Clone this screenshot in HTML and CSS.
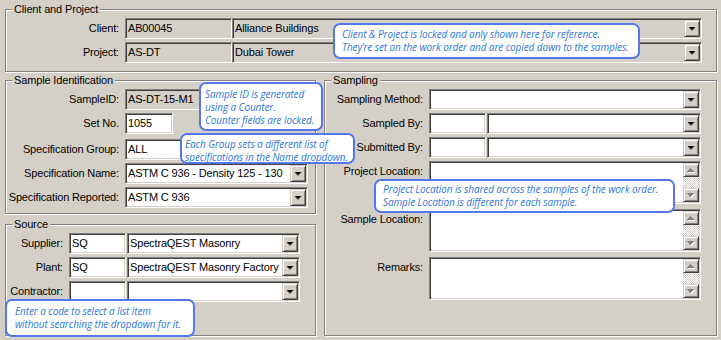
FILE: index.html
```html
<!DOCTYPE html>
<html lang="en">
<head>
	<meta charset="UTF-8">
	<title>Sample</title>
	<link rel="stylesheet" href="styles.css">
</head>
<body>
	<div class="form">
		<fieldset class="group group-client">
			<legend>Client and Project</legend>
			<div class="row">
				<span class="lbl lbl-wide">Client:</span>
				<div class="field locked code-client">AB00045</div>
				<div class="field combo locked name-client"><span>Alliance Buildings</span><span class="drop"></span></div>
			</div>
			<div class="row">
				<span class="lbl lbl-wide">Project:</span>
				<div class="field locked code-client">AS-DT</div>
				<div class="field combo locked name-client"><span>Dubai Tower</span><span class="drop"></span></div>
			</div>
		</fieldset>

		<div class="columns">
			<div class="col-left">
				<fieldset class="group group-ident">
					<legend>Sample Identification</legend>
					<div class="row">
						<span class="lbl lbl-wide">SampleID:</span>
						<div class="field locked wide">AS-DT-15-M1</div>
					</div>
					<div class="row">
						<span class="lbl lbl-wide">Set No.</span>
						<div class="field set-no">1055</div>
					</div>
					<div class="row row-spaced">
						<span class="lbl lbl-wide">Specification Group:</span>
						<div class="field combo wide"><span>ALL</span><span class="drop"></span></div>
					</div>
					<div class="row">
						<span class="lbl lbl-wide">Specification Name:</span>
						<div class="field combo wide"><span>ASTM C 936 - Density 125 - 130</span><span class="drop"></span></div>
					</div>
					<div class="row">
						<span class="lbl lbl-wide">Specification Reported:</span>
						<div class="field combo wide"><span>ASTM C 936</span><span class="drop"></span></div>
					</div>
				</fieldset>

				<fieldset class="group group-source">
					<legend>Source</legend>
					<div class="row">
						<span class="lbl lbl-source">Supplier:</span>
						<div class="field code">SQ</div>
						<div class="field combo name-source"><span>SpectraQEST Masonry</span><span class="drop"></span></div>
					</div>
					<div class="row">
						<span class="lbl lbl-source">Plant:</span>
						<div class="field code">SQ</div>
						<div class="field combo name-source"><span>SpectraQEST Masonry Factory</span><span class="drop"></span></div>
					</div>
					<div class="row">
						<span class="lbl lbl-source">Contractor:</span>
						<div class="field code"></div>
						<div class="field combo name-source"><span></span><span class="drop"></span></div>
					</div>
				</fieldset>
			</div>

			<fieldset class="group group-sampling">
				<legend>Sampling</legend>
				<div class="row">
					<span class="lbl lbl-sampling">Sampling Method:</span>
					<div class="field combo full"><span></span><span class="drop"></span></div>
				</div>
				<div class="row">
					<span class="lbl lbl-sampling">Sampled By:</span>
					<div class="field code"></div>
					<div class="field combo name-sampling"><span></span><span class="drop"></span></div>
				</div>
				<div class="row">
					<span class="lbl lbl-sampling">Submitted By:</span>
					<div class="field code"></div>
					<div class="field combo name-sampling"><span></span><span class="drop"></span></div>
				</div>
				<div class="row row-memo">
					<span class="lbl lbl-sampling">Project Location:</span>
					<div class="field memo full">
						<div class="scroll"><span class="sb-btn sb-up"></span><span class="sb-track"></span><span class="sb-btn sb-down"></span></div>
					</div>
				</div>
				<div class="row row-memo">
					<span class="lbl lbl-sampling">Sample Location:</span>
					<div class="field memo full">
						<div class="scroll"><span class="sb-btn sb-up"></span><span class="sb-track"></span><span class="sb-btn sb-down"></span></div>
					</div>
				</div>
				<div class="row row-memo">
					<span class="lbl lbl-sampling">Remarks:</span>
					<div class="field memo full">
						<div class="scroll"><span class="sb-btn sb-up"></span><span class="sb-track"></span><span class="sb-btn sb-down"></span></div>
					</div>
				</div>
			</fieldset>
		</div>

		<!-- help callouts lie over the form -->
		<div class="callout callout-client">Client &amp; Project is locked and only shown here for reference.<br>They’re set on the work order and are copied down to the samples.</div>
		<div class="callout callout-id">Sample ID is generated<br>using a Counter.<br>Counter fields are locked.</div>
		<div class="callout callout-group">Each Group sets a different list of<br>specifications in the Name dropdown.</div>
		<div class="callout callout-location">Project Location is shared across the samples of the work order.<br>Sample Location is different for each sample.</div>
		<div class="callout callout-code">Enter a code to select a list item<br>without searching the dropdown for it.</div>
	</div>
</body>
</html>
```

FILE: styles.css
```css
body {
	margin: 0;
	background: #d4d0c8;
	font-family: "Liberation Sans", Arial, sans-serif;
	font-size: 11px;
	letter-spacing: -0.15px;
	color: #000;
}
.form {
	position: relative;
	width: 721px;
	height: 340px;
	padding: 3px 0 0 5px;
	box-sizing: border-box;
	overflow: hidden;
}

/* group boxes */
.group {
	margin: 0;
	padding: 2px 0 0 0;
	border: 1px solid #808080;
	box-shadow: inset 1px 1px #fff, 1px 1px #fff;
	box-sizing: border-box;
	min-width: 0;
}
.group legend {
	margin-left: 6px;
	padding: 0 2px;
	line-height: 13px;
	background: #d4d0c8;
}
.group-client {
	width: 712px;
	padding-bottom: 8px;
}
.columns {
	display: flex;
	margin-top: 2px;
}
.col-left {
	width: 311px;
	display: flex;
	flex-direction: column;
}
.group-ident {
	padding-bottom: 5px;
}
.group-source {
	margin-top: 4px;
	padding-bottom: 33px;
	flex: 1;
}
.group-sampling {
	width: 393px;
	margin-left: 8px;
}

/* rows and labels */
.row {
	display: flex;
	align-items: flex-start;
	height: 21px;
}
.row + .row {
	margin-top: 3px;
}
.row.row-spaced {
	margin-top: 5px;
}
.row-memo {
	height: 43px;
}
.row-memo + .row-memo {
	margin-top: 5px;
}
.lbl {
	flex: none;
	line-height: 21px;
	text-align: right;
	margin-right: 6px;
	white-space: nowrap;
}
.lbl-wide { width: 113px; }
.lbl-source { width: 57px; }
.lbl-sampling { width: 98px; }

/* sunken fields */
.field {
	flex: none;
	box-sizing: border-box;
	height: 21px;
	padding: 0 2px;
	line-height: 19px;
	background: #fff;
	border: 1px solid;
	border-color: #808080 #fff #fff #808080;
	box-shadow: inset 1px 1px #404040, inset -1px -1px #d4d0c8;
	white-space: nowrap;
	overflow: hidden;
}
.field.locked {
	background: #d4d0c8;
}
.code-client { width: 107px; }
.name-client { width: 470px; }
.wide { width: 183px; }
.set-no { width: 48px; }
.code { width: 57px; }
.name-source { width: 173px; margin-left: 1px; }
.name-sampling { width: 214px; margin-left: 1px; }
.full { width: 272px; }

.combo {
	display: flex;
	justify-content: space-between;
	padding-right: 1px;
}
.drop {
	flex: none;
	width: 16px;
	height: 17px;
	margin-top: 1px;
	box-sizing: border-box;
	background: #d4d0c8;
	border: 1px solid;
	border-color: #d4d0c8 #404040 #404040 #d4d0c8;
	box-shadow: inset 1px 1px #fff, inset -1px -1px #808080;
	display: flex;
	align-items: center;
	justify-content: center;
}
.drop::after {
	content: "";
	width: 7px;
	height: 4px;
	background: #000;
	clip-path: polygon(0 0, 7px 0, 7px 1px, 6px 1px, 6px 2px, 5px 2px, 5px 3px, 4px 3px, 4px 4px, 3px 4px, 3px 3px, 2px 3px, 2px 2px, 1px 2px, 1px 1px, 0 1px);
}

/* memo with scroll bar */
.memo {
	height: 43px;
	display: flex;
	justify-content: flex-end;
	padding: 1px;
}
.scroll {
	width: 16px;
	display: flex;
	flex-direction: column;
}
.sb-track {
	flex: 1;
	background: repeating-conic-gradient(#fff 0 25%, #d4d0c8 0 50%) 0 0 / 2px 2px;
}
.sb-btn {
	position: relative;
	height: 14px;
	box-sizing: border-box;
	background: #d4d0c8;
	border: 1px solid;
	border-color: #d4d0c8 #404040 #404040 #d4d0c8;
	box-shadow: inset 1px 1px #fff, inset -1px -1px #808080;
}
.sb-btn::before,
.sb-btn::after {
	content: "";
	position: absolute;
	left: 3px;
	top: 4px;
	width: 7px;
	height: 4px;
}
.sb-btn::before {
	left: 4px;
	top: 5px;
	background: #fff;
}
.sb-btn::after {
	background: #808080;
}
.sb-up::before,
.sb-up::after {
	clip-path: polygon(3px 0, 4px 0, 4px 1px, 5px 1px, 5px 2px, 6px 2px, 6px 3px, 7px 3px, 7px 4px, 0 4px, 0 3px, 1px 3px, 1px 2px, 2px 2px, 2px 1px, 3px 1px);
}
.sb-down::before,
.sb-down::after {
	clip-path: polygon(0 0, 7px 0, 7px 1px, 6px 1px, 6px 2px, 5px 2px, 5px 3px, 4px 3px, 4px 4px, 3px 4px, 3px 3px, 2px 3px, 2px 2px, 1px 2px, 1px 1px, 0 1px);
}

/* help callouts */
.callout {
	position: absolute;
	box-sizing: border-box;
	background: #fff;
	border: 2px solid #5577ee;
	border-radius: 7px;
	color: #2f78d6;
	font-family: "Open Sans", sans-serif;
	font-style: italic;
	font-size: 10px;
	letter-spacing: -0.1px;
	line-height: 13px;
	white-space: nowrap;
}
.callout-client {
	left: 333px;
	top: 23px;
	width: 307px;
	height: 36px;
	padding: 3px 0 0 7px;
}
.callout-id {
	left: 199px;
	top: 82px;
	width: 124px;
	height: 49px;
	padding: 4px 0 0 4px;
}
.callout-group {
	left: 180px;
	top: 133px;
	width: 175px;
	height: 31px;
	padding: 3px 0 0 3px;
}
.callout-location {
	left: 374px;
	top: 179px;
	width: 301px;
	height: 34px;
	padding: 2px 0 0 7px;
}
.callout-code {
	left: 5px;
	top: 299px;
	width: 190px;
	height: 38px;
	padding: 4px 0 0 8px;
}
```
